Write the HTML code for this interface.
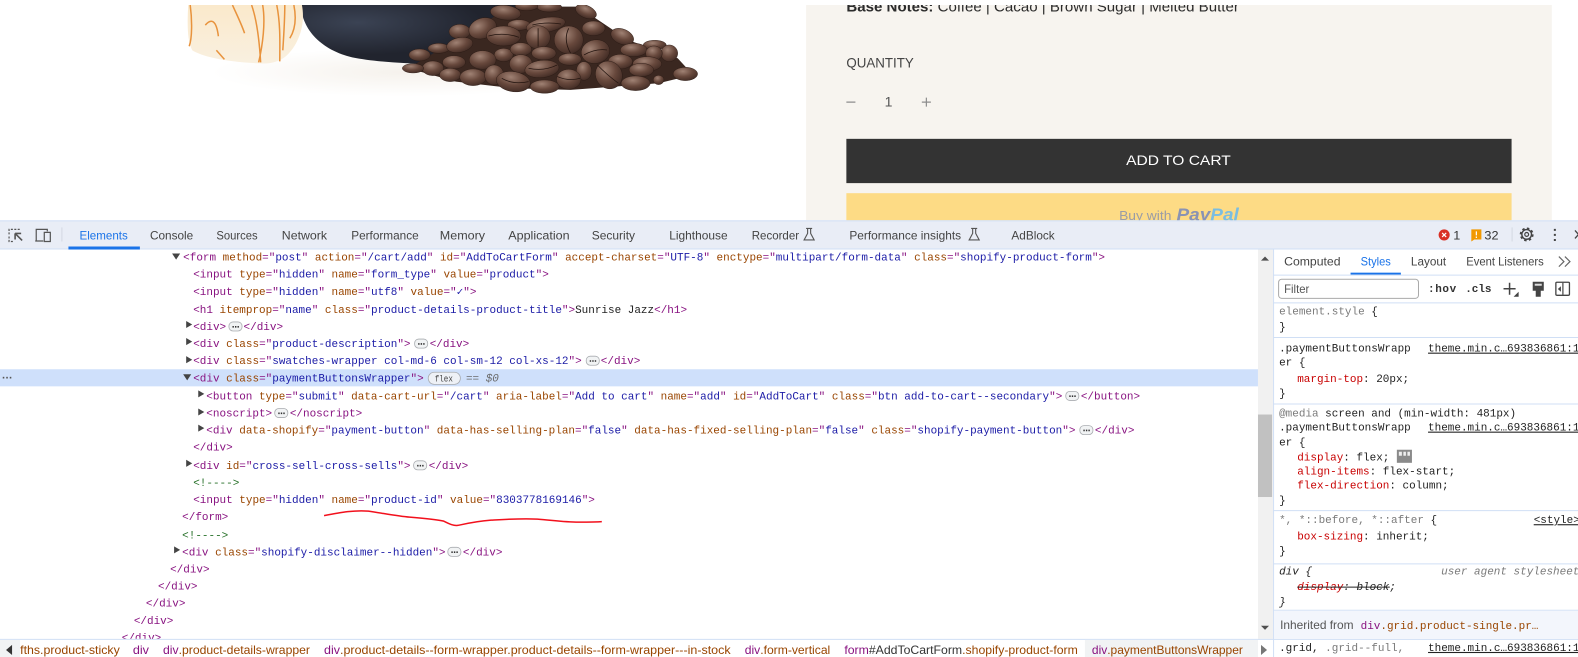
<!DOCTYPE html>
<html><head><meta charset="utf-8"><title>DevTools</title>
<style>
html,body{margin:0;padding:0;background:#fff;width:1578px;height:657px;overflow:hidden}
svg{display:block}
text{white-space:pre}
.m{font-family:"Liberation Mono",monospace;font-size:10.92px}
.s{font-family:"Liberation Sans",sans-serif;font-size:12px;fill:#444}
.t{fill:#881280}.a{fill:#994500}.v{fill:#1a1aa6}.c{fill:#236e25}
.p{fill:#c80000}.d{fill:#222}.g{fill:#7a7a7a}
.b{fill:url(#bean);stroke:#2a1a14;stroke-width:1.2}
.cr{fill:none;stroke:#241510;stroke-width:2.2}
.l{stroke:#d0dff5;stroke-width:1}
</style></head><body>
<svg width="1578" height="657" viewBox="0 0 1568 653" preserveAspectRatio="none" xmlns="http://www.w3.org/2000/svg">
<defs>
<radialGradient id="bean" cx=".4" cy=".3" r=".8"><stop offset="0" stop-color="#a08274"/><stop offset=".5" stop-color="#67483c"/><stop offset="1" stop-color="#3a2620"/></radialGradient>
<radialGradient id="cup" cx=".25" cy=".3" r=".55"><stop offset="0" stop-color="#3b4354"/><stop offset="1" stop-color="#21242e"/></radialGradient>
<radialGradient id="shade" cx=".5" cy=".5" r=".5"><stop offset="0" stop-color="#efe9e0"/><stop offset="1" stop-color="#fff"/></radialGradient>
<linearGradient id="truf" x1="0" x2="0" y1="0" y2="1"><stop offset="0" stop-color="#fae9cb"/><stop offset="1" stop-color="#f9f0e0"/></linearGradient>
<clipPath id="top"><rect x="0" y="5" width="1578" height="214"/></clipPath>
<clipPath id="tree"><rect x="0" y="248" width="1250" height="387"/></clipPath>
<clipPath id="rp"><rect x="1265" y="248" width="313" height="409"/></clipPath>
</defs>

<g clip-path="url(#top)">
<ellipse cx="400" cy="72" rx="190" ry="24" fill="url(#shade)" opacity=".6"/>
<path d="M299 5C300 30 320 50 350 57C380 63 430 65 460 62L520 30L525 5Z" fill="url(#cup)"/>
<path d="M187 5C186 25 186 40 191 50C200 56 225 62 259 63C270 64 280 60 285 55C296 45 304 25 300 5Z" fill="url(#truf)"/>
<g fill="none" stroke="#e8933d" stroke-width="1.500">
<path d="M189 5C191 20 191 38 188 46"/><path d="M231 5C235 14 240 24 243 33"/><path d="M204 25C210 18 215 20 217 36"/>
<path d="M250 5C256 22 258 45 259 62"/><path d="M261 5C264 22 261 45 257 62"/><path d="M275 5C279 25 278 45 278 61"/>
<path d="M283 5C283 20 282 35 281 50"/><path d="M292 5C295 20 293 30 288 38"/><path d="M215 50L223 59"/>
</g>
<g transform="translate(149 0) scale(.38 .331)">
<path d="M675 205L800 120L900 50L1000 20L1120 20L1250 120L1380 175L1420 225L1330 250L1100 270L950 265L800 245Z" fill="#3a2720"/>
<ellipse class="b" cx="985" cy="18" rx="30" ry="14"/><ellipse class="b" cx="1045" cy="22" rx="32" ry="14"/>
<ellipse class="b" cx="930" cy="38" rx="40" ry="22" transform="rotate(8 930 38)"/><ellipse class="b" cx="1140" cy="35" rx="30" ry="18" transform="rotate(30 1140 35)"/>
<ellipse class="b" cx="810" cy="95" rx="28" ry="22"/><ellipse class="b" cx="870" cy="85" rx="38" ry="30" transform="rotate(-30 870 85)"/>
<ellipse class="b" cx="965" cy="75" rx="30" ry="16"/><ellipse class="b" cx="1160" cy="85" rx="30" ry="22"/>
<ellipse class="b" cx="1235" cy="110" rx="32" ry="22" transform="rotate(30 1235 110)"/><ellipse class="b" cx="1320" cy="135" rx="30" ry="14"/>
<ellipse class="b" cx="1035" cy="75" rx="52" ry="22" transform="rotate(-12 1035 75)"/>
<ellipse class="b" cx="925" cy="108" rx="45" ry="30"/><ellipse class="b" cx="1015" cy="112" rx="32" ry="35"/>
<ellipse class="b" cx="1095" cy="120" rx="38" ry="42"/><ellipse class="b" cx="755" cy="145" rx="28" ry="15"/>
<ellipse class="b" cx="810" cy="135" rx="35" ry="22" transform="rotate(-15 810 135)"/><ellipse class="b" cx="1265" cy="150" rx="35" ry="20"/>
<ellipse class="b" cx="1165" cy="155" rx="38" ry="35" transform="rotate(-30 1165 155)"/><ellipse class="b" cx="1358" cy="160" rx="22" ry="25"/>
<ellipse class="b" cx="705" cy="165" rx="28" ry="18"/><ellipse class="b" cx="1318" cy="160" rx="22" ry="22"/>
<ellipse class="b" cx="925" cy="165" rx="25" ry="20"/><ellipse class="b" cx="970" cy="148" rx="28" ry="20"/><ellipse class="b" cx="1030" cy="160" rx="32" ry="20"/>
<ellipse class="b" cx="870" cy="180" rx="35" ry="28"/><ellipse class="b" cx="970" cy="192" rx="30" ry="28"/><ellipse class="b" cx="1098" cy="178" rx="30" ry="18"/>
<ellipse class="b" cx="795" cy="187" rx="30" ry="20"/><ellipse class="b" cx="1230" cy="185" rx="32" ry="22"/><ellipse class="b" cx="1300" cy="192" rx="38" ry="22"/>
<ellipse class="b" cx="740" cy="205" rx="28" ry="22"/><ellipse class="b" cx="688" cy="205" rx="28" ry="14"/><ellipse class="b" cx="1400" cy="222" rx="32" ry="20"/>
<ellipse class="b" cx="1285" cy="210" rx="32" ry="20"/><ellipse class="b" cx="1025" cy="207" rx="45" ry="26" transform="rotate(-8 1025 207)"/>
<ellipse class="b" cx="785" cy="225" rx="28" ry="20"/><ellipse class="b" cx="845" cy="232" rx="35" ry="25"/><ellipse class="b" cx="900" cy="225" rx="25" ry="30"/>
<ellipse class="b" cx="1135" cy="213" rx="20" ry="28"/><ellipse class="b" cx="1330" cy="240" rx="14" ry="14"/>
<ellipse class="b" cx="1200" cy="225" rx="35" ry="42" transform="rotate(-12 1200 225)"/><ellipse class="b" cx="1095" cy="238" rx="32" ry="30"/>
<ellipse class="b" cx="1270" cy="250" rx="38" ry="22"/><ellipse class="b" cx="950" cy="245" rx="45" ry="30" transform="rotate(12 950 245)"/><ellipse class="b" cx="1032" cy="260" rx="38" ry="20"/>
<path class="cr" d="M885 108Q925 96 965 112M1015 85V140M1095 85Q1080 120 1100 160M1170 195Q1195 225 1225 250M920 235Q950 255 990 245M990 205Q1030 215 1065 195M1065 230Q1095 245 1125 235M1000 75Q1035 65 1075 72M1135 165Q1165 145 1195 150"/>
</g>
<rect x="801" y="5" width="741" height="214" fill="#f7f4ef"/>
<text x="841" y="11.500" style="font-family:'Liberation Sans',sans-serif;font-size:15px;fill:#2b2b2b" textLength="390" lengthAdjust="spacingAndGlyphs"><tspan font-weight="bold">Base Notes:</tspan> Coffee | Cacao | Brown Sugar | Melted Butter</text>
<text x="841" y="67" style="font-family:'Liberation Sans',sans-serif;font-size:14px;fill:#444" textLength="67" lengthAdjust="spacingAndGlyphs">QUANTITY</text>
<path d="M841 101.500H850M916 101.500H925M920.500 97V106" stroke="#8d8d8d" stroke-width="1.200"/>
<text x="879" y="106" style="font-family:'Liberation Sans',sans-serif;font-size:14px;fill:#555">1</text>
<rect x="841" y="138" width="661" height="44" fill="#333"/>
<text x="1119" y="164" style="font-family:'Liberation Sans',sans-serif;font-size:14px;fill:#fff" textLength="104" lengthAdjust="spacingAndGlyphs">ADD TO CART</text>
<rect x="841" y="192" width="661" height="27" fill="#fddb85"/>
<text x="1112" y="218.500" style="font-family:'Liberation Sans',sans-serif;font-size:13px;fill:#9a9ca6" textLength="52" lengthAdjust="spacingAndGlyphs">Buy with</text>
<text x="1169" y="219" style="font-family:'Liberation Sans',sans-serif;font-size:17px;font-weight:bold;font-style:italic" textLength="62" lengthAdjust="spacingAndGlyphs"><tspan fill="#8a93b3">Pay</tspan><tspan fill="#7bbde0">Pal</tspan></text>
</g>

<!-- toolbar -->
<rect x="0" y="219" width="1578" height="28" fill="#e9edf6"/>
<path class="l" d="M0 219.500H1578M0 247.500H1578"/>
<path d="M61.500 226V240" stroke="#d3d8e2"/><path d="M1430.500 226V240" stroke="#d3d8e2" transform="translate(72 0)"/>
<g fill="none" stroke="#555" stroke-width="1.200">
<path d="M9 233V228H21M9 235V240H13" stroke-dasharray="2 1.400"/>
<path d="M15 232L22 239M15 232V238M15 232H21" stroke-width="1.600"/>
<path d="M36 239V228H47V230M35 239.500H43M44 231H50V240H44Z"/>
</g>
<rect x="68" y="245" width="71" height="3" fill="#1a73e8"/>
<g class="tabs">
<text class="s" x="79" y="238" style="fill:#1a73e8" textLength="48" lengthAdjust="spacingAndGlyphs">Elements</text>
<text class="s" x="149" y="238" textLength="43" lengthAdjust="spacingAndGlyphs">Console</text>
<text class="s" x="215" y="238" textLength="41" lengthAdjust="spacingAndGlyphs">Sources</text>
<text class="s" x="280" y="238" textLength="45" lengthAdjust="spacingAndGlyphs">Network</text>
<text class="s" x="349" y="238" textLength="67" lengthAdjust="spacingAndGlyphs">Performance</text>
<text class="s" x="437" y="238" textLength="45" lengthAdjust="spacingAndGlyphs">Memory</text>
<text class="s" x="505" y="238" textLength="61" lengthAdjust="spacingAndGlyphs">Application</text>
<text class="s" x="588" y="238" textLength="43" lengthAdjust="spacingAndGlyphs">Security</text>
<text class="s" x="665" y="238" textLength="58" lengthAdjust="spacingAndGlyphs">Lighthouse</text>
<text class="s" x="747" y="238" textLength="47" lengthAdjust="spacingAndGlyphs">Recorder</text>
<text class="s" x="844" y="238" textLength="111" lengthAdjust="spacingAndGlyphs">Performance insights</text>
<text class="s" x="1005" y="238" textLength="43" lengthAdjust="spacingAndGlyphs">AdBlock</text>
</g>
<path d="M801 227H807M802.500 227V232L799 238.500H809L805.500 232V227M965 227H971M966.500 227V232L963 238.500H973L969.500 232V227" fill="none" stroke="#555" stroke-width="1.100"/>
<circle cx="1435" cy="233.500" r="5.500" fill="#d93025"/>
<path d="M1433 231.500L1437 235.500M1437 231.500L1433 235.500" stroke="#fff" stroke-width="1.200"/>
<text class="s" x="1444" y="238" style="fill:#333" textLength="7" lengthAdjust="spacingAndGlyphs">1</text>
<path d="M1462 228H1472V238H1465L1462 240Z" fill="#f29900"/><path d="M1467 230V234M1467 235V236.500" stroke="#fff" stroke-width="1.200"/>
<text class="s" x="1475" y="238" style="fill:#333" textLength="14" lengthAdjust="spacingAndGlyphs">32</text>
<circle cx="1517" cy="233" r="4.800" fill="none" stroke="#444" stroke-width="1.400"/>
<circle cx="1517" cy="233" r="6" fill="none" stroke="#444" stroke-width="1.800" stroke-dasharray="2.400 2.312"/>
<circle cx="1517" cy="233" r="1.900" fill="none" stroke="#444" stroke-width="1.200"/>
<path d="M1545 227.500V229.500M1545 232.500V234.500M1545 237.500V239.500" stroke="#444" stroke-width="2"/>
<path d="M1565 229L1572 237M1572 229L1565 237" stroke="#444" stroke-width="1.300"/>

<!-- highlighted row -->
<rect x="0" y="367" width="1250" height="17" fill="#cfe0fb"/>
<text x="2" y="376" style="font-family:'Liberation Sans',sans-serif;font-size:11px;font-weight:bold;fill:#555" textLength="10" lengthAdjust="spacing">...</text>

<g clip-path="url(#tree)" class="m">
<text x="182" y="259"><tspan class="t">&lt;form</tspan><tspan class="a"> method</tspan><tspan class="t">="</tspan><tspan class="v">post</tspan><tspan class="t">"</tspan><tspan class="a"> action</tspan><tspan class="t">="</tspan><tspan class="v">/cart/add</tspan><tspan class="t">"</tspan><tspan class="a"> id</tspan><tspan class="t">="</tspan><tspan class="v">AddToCartForm</tspan><tspan class="t">"</tspan><tspan class="a"> accept-charset</tspan><tspan class="t">="</tspan><tspan class="v">UTF-8</tspan><tspan class="t">"</tspan><tspan class="a"> enctype</tspan><tspan class="t">="</tspan><tspan class="v">multipart/form-data</tspan><tspan class="t">"</tspan><tspan class="a"> class</tspan><tspan class="t">="</tspan><tspan class="v">shopify-product-form</tspan><tspan class="t">"&gt;</tspan></text>
<text x="192" y="276"><tspan class="t">&lt;input</tspan><tspan class="a"> type</tspan><tspan class="t">="</tspan><tspan class="v">hidden</tspan><tspan class="t">"</tspan><tspan class="a"> name</tspan><tspan class="t">="</tspan><tspan class="v">form_type</tspan><tspan class="t">"</tspan><tspan class="a"> value</tspan><tspan class="t">="</tspan><tspan class="v">product</tspan><tspan class="t">"&gt;</tspan></text>
<text x="192" y="293"><tspan class="t">&lt;input</tspan><tspan class="a"> type</tspan><tspan class="t">="</tspan><tspan class="v">hidden</tspan><tspan class="t">"</tspan><tspan class="a"> name</tspan><tspan class="t">="</tspan><tspan class="v">utf8</tspan><tspan class="t">"</tspan><tspan class="a"> value</tspan><tspan class="t">="</tspan><tspan class="v">✓</tspan><tspan class="t">"&gt;</tspan></text>
<text x="192" y="311"><tspan class="t">&lt;h1</tspan><tspan class="a"> itemprop</tspan><tspan class="t">="</tspan><tspan class="v">name</tspan><tspan class="t">"</tspan><tspan class="a"> class</tspan><tspan class="t">="</tspan><tspan class="v">product-details-product-title</tspan><tspan class="t">"&gt;</tspan><tspan class="d">Sunrise Jazz</tspan><tspan class="t">&lt;/h1&gt;</tspan></text>
<text x="192" y="328" class="t">&lt;div&gt;</text><text x="242" y="328" class="t">&lt;/div&gt;</text>
<text x="192" y="345"><tspan class="t">&lt;div</tspan><tspan class="a"> class</tspan><tspan class="t">="</tspan><tspan class="v">product-description</tspan><tspan class="t">"&gt;</tspan></text><text x="427" y="345" class="t">&lt;/div&gt;</text>
<text x="192" y="362"><tspan class="t">&lt;div</tspan><tspan class="a"> class</tspan><tspan class="t">="</tspan><tspan class="v">swatches-wrapper col-md-6 col-sm-12 col-xs-12</tspan><tspan class="t">"&gt;</tspan></text><text x="597" y="362" class="t">&lt;/div&gt;</text>
<text x="192" y="379"><tspan class="t">&lt;div</tspan><tspan class="a"> class</tspan><tspan class="t">="</tspan><tspan class="v">paymentButtonsWrapper</tspan><tspan class="t">"&gt;</tspan></text>
<text x="463" y="379" style="font-style:italic;fill:#6b6b6b">== $0</text>
<text x="205" y="397"><tspan class="t">&lt;button</tspan><tspan class="a"> type</tspan><tspan class="t">="</tspan><tspan class="v">submit</tspan><tspan class="t">"</tspan><tspan class="a"> data-cart-url</tspan><tspan class="t">="</tspan><tspan class="v">/cart</tspan><tspan class="t">"</tspan><tspan class="a"> aria-label</tspan><tspan class="t">="</tspan><tspan class="v">Add to cart</tspan><tspan class="t">"</tspan><tspan class="a"> name</tspan><tspan class="t">="</tspan><tspan class="v">add</tspan><tspan class="t">"</tspan><tspan class="a"> id</tspan><tspan class="t">="</tspan><tspan class="v">AddToCart</tspan><tspan class="t">"</tspan><tspan class="a"> class</tspan><tspan class="t">="</tspan><tspan class="v">btn add-to-cart--secondary</tspan><tspan class="t">"&gt;</tspan></text><text x="1074" y="397" class="t">&lt;/button&gt;</text>
<text x="205" y="414" class="t">&lt;noscript&gt;</text><text x="288" y="414" class="t">&lt;/noscript&gt;</text>
<text x="205" y="431"><tspan class="t">&lt;div</tspan><tspan class="a"> data-shopify</tspan><tspan class="t">="</tspan><tspan class="v">payment-button</tspan><tspan class="t">"</tspan><tspan class="a"> data-has-selling-plan</tspan><tspan class="t">="</tspan><tspan class="v">false</tspan><tspan class="t">"</tspan><tspan class="a"> data-has-fixed-selling-plan</tspan><tspan class="t">="</tspan><tspan class="v">false</tspan><tspan class="t">"</tspan><tspan class="a"> class</tspan><tspan class="t">="</tspan><tspan class="v">shopify-payment-button</tspan><tspan class="t">"&gt;</tspan></text><text x="1088" y="431" class="t">&lt;/div&gt;</text>
<text x="192" y="448" class="t">&lt;/div&gt;</text>
<text x="192" y="466"><tspan class="t">&lt;div</tspan><tspan class="a"> id</tspan><tspan class="t">="</tspan><tspan class="v">cross-sell-cross-sells</tspan><tspan class="t">"&gt;</tspan></text><text x="426" y="466" class="t">&lt;/div&gt;</text>
<text x="192" y="483" class="c">&lt;!----&gt;</text>
<text x="192" y="500"><tspan class="t">&lt;input</tspan><tspan class="a"> type</tspan><tspan class="t">="</tspan><tspan class="v">hidden</tspan><tspan class="t">"</tspan><tspan class="a"> name</tspan><tspan class="t">="</tspan><tspan class="v">product-id</tspan><tspan class="t">"</tspan><tspan class="a"> value</tspan><tspan class="t">="</tspan><tspan class="v">8303778169146</tspan><tspan class="t">"&gt;</tspan></text>
<text x="181" y="517" class="t">&lt;/form&gt;</text>
<text x="181" y="535" class="c">&lt;!----&gt;</text>
<text x="181" y="552"><tspan class="t">&lt;div</tspan><tspan class="a"> class</tspan><tspan class="t">="</tspan><tspan class="v">shopify-disclaimer--hidden</tspan><tspan class="t">"&gt;</tspan></text><text x="460" y="552" class="t">&lt;/div&gt;</text>
<text x="169" y="569" class="t">&lt;/div&gt;</text>
<text x="157" y="586" class="t">&lt;/div&gt;</text>
<text x="145" y="603" class="t">&lt;/div&gt;</text>
<text x="133" y="620" class="t">&lt;/div&gt;</text>
<text x="121" y="637" class="t">&lt;/div&gt;</text>
</g>
<!-- badges -->
<g fill="#f1f3f4" stroke="#a9acb0" stroke-width=".8">
<rect x="227.500" y="320" width="13" height="9" rx="4"/><rect x="412" y="337" width="13" height="9" rx="4"/><rect x="582.500" y="354" width="13" height="9" rx="4"/>
<rect x="1059" y="389" width="13" height="9" rx="4"/><rect x="273" y="406" width="13" height="9" rx="4"/><rect x="1073" y="423" width="13" height="9" rx="4"/>
<rect x="411" y="458" width="13" height="9" rx="4"/><rect x="445" y="544" width="13" height="9" rx="4"/>
<rect x="425.500" y="370" width="32" height="12" rx="6" fill="#eef1f6"/>
</g>
<text x="432" y="379" style="font-family:'Liberation Mono',monospace;font-size:9px;fill:#444" textLength="18" lengthAdjust="spacingAndGlyphs">flex</text>
<g fill="#333">
<path d="M231 324h1.400v1.600H231zM233.500 324h1.400v1.600h-1.400zM236 324h1.400v1.600H236zM415.500 341h1.400v1.600h-1.400zM418 341h1.400v1.600H418zM420.500 341h1.400v1.600h-1.400zM586 358h1.400v1.600H586zM588.500 358h1.400v1.600h-1.400zM591 358h1.400v1.600H591zM1062.500 393h1.400v1.600h-1.400zM1065 393h1.400v1.600H1065zM1067.500 393h1.400v1.600h-1.400zM276.500 410h1.400v1.600h-1.400zM279 410h1.400v1.600H279zM281.500 410h1.400v1.600h-1.400zM1076.500 427h1.400v1.600h-1.400zM1079 427h1.400v1.600H1079zM1081.500 427h1.400v1.600h-1.400zM414.500 462h1.400v1.600h-1.400zM417 462h1.400v1.600H417zM419.500 462h1.400v1.600h-1.400zM448.500 548h1.400v1.600h-1.400zM451 548h1.400v1.600H451zM453.500 548h1.400v1.600h-1.400z"/>
</g>
<!-- tree arrows -->
<g fill="#444">
<path d="M171 252H179L175 258ZM182 372H190L186 378Z"/>
<path d="M185 319V326L191 322.500ZM185 336V343L191 339.500ZM185 354V361L191 357.500ZM197 388V395L203 391.500ZM197 406V413L203 409.500ZM197 422V429L203 425.500ZM185 457V464L191 460.500ZM173 543V550L179 546.500Z"/>
</g>
<path d="M322 512.500C340 509 352 507 366 508C380 510 395 513 407 514C420 515 432 516 441 518C447 521 451 523 456 522C465 520 475 518 488 517C505 516 520 515 534 516C548 517 560 519 575 519C585 519 592 519 598 518.500" fill="none" stroke="#f2101c" stroke-width="1.500"/>

<!-- scrollbar -->
<rect x="1250" y="248" width="15" height="387" fill="#f1f1f1"/>
<rect x="1250" y="412" width="14" height="82" fill="#c1c1c1"/>
<path d="M1253 259H1261L1257 255ZM1253 622H1261L1257 626Z" fill="#505050"/>
<rect x="1265" y="248" width="313" height="409" fill="#fff"/>
<path class="l" d="M1265.500 248V657"/>

<!-- right panel -->
<text class="s" x="1276" y="264" textLength="56" lengthAdjust="spacingAndGlyphs">Computed</text>
<text class="s" x="1352" y="264" style="fill:#1a73e8" textLength="30" lengthAdjust="spacingAndGlyphs">Styles</text>
<text class="s" x="1402" y="264" textLength="35" lengthAdjust="spacingAndGlyphs">Layout</text>
<text class="s" x="1457" y="264" textLength="77" lengthAdjust="spacingAndGlyphs">Event Listeners</text>
<path d="M1549 255L1554 260L1549 265M1555 255L1560 260L1555 265" fill="none" stroke="#666" stroke-width="1.200"/>
<rect x="1342" y="271" width="50" height="2" fill="#1a73e8"/>
<path class="l" d="M1265 273.500H1578M1265 301H1578M1265 335.500H1578M1265 401.500H1578M1265 507.500H1578M1265 560.500H1578M1265 606.500H1578M1265 635.500H1578"/>
<rect x="1270.500" y="277.500" width="139" height="19" rx="3" fill="#fff" stroke="#a9a9a9"/>
<text class="s" x="1276" y="291" style="fill:#555" textLength="25" lengthAdjust="spacingAndGlyphs">Filter</text>
<g clip-path="url(#rp)" class="m">
<text x="1419" y="290" style="fill:#333;font-weight:bold" textLength="28">:hov</text>
<text x="1456" y="290" style="fill:#333;font-weight:bold" textLength="26">.cls</text>
<text x="1271" y="312.500" class="g">element.style <tspan class="d">{</tspan></text>
<text x="1271" y="328" class="d">}</text>
<text x="1271" y="349.500" class="d">.paymentButtonsWrapp</text>
<text x="1419" y="349.500" class="d" text-decoration="underline">theme.min.c…693836861:1</text>
<text x="1271" y="363.500" class="d">er {</text>
<text x="1289" y="379.500"><tspan class="p">margin-top</tspan><tspan class="d">: 20px;</tspan></text>
<text x="1271" y="394" class="d">}</text>
<text x="1271" y="414"><tspan class="g">@media</tspan><tspan class="d"> screen and (min-width: 481px)</tspan></text>
<text x="1271" y="428" class="d">.paymentButtonsWrapp</text>
<text x="1419" y="428" class="d" text-decoration="underline">theme.min.c…693836861:1</text>
<text x="1271" y="443" class="d">er {</text>
<text x="1289" y="457.500"><tspan class="p">display</tspan><tspan class="d">: flex;</tspan></text>
<text x="1289" y="471.500"><tspan class="p">align-items</tspan><tspan class="d">: flex-start;</tspan></text>
<text x="1289" y="485.500"><tspan class="p">flex-direction</tspan><tspan class="d">: column;</tspan></text>
<text x="1271" y="500.500" class="d">}</text>
<text x="1271" y="520"><tspan class="g">*, *::before, *::after </tspan><tspan class="d">{</tspan></text>
<text x="1524" y="520" class="d" text-decoration="underline">&lt;style&gt;</text>
<text x="1289" y="536"><tspan class="p">box-sizing</tspan><tspan class="d">: inherit;</tspan></text>
<text x="1271" y="550.500" class="d">}</text>
<text x="1271" y="571" style="font-style:italic" class="d">div {</text>
<text x="1432" y="571" style="font-style:italic" class="g">user agent stylesheet</text>
<text x="1289" y="586.500" style="font-style:italic"><tspan class="p">display</tspan><tspan class="d">: block;</tspan></text>
<path d="M1289 583.500H1381" stroke="#222"/>
<text x="1271" y="601.500" class="d" style="font-style:italic">}</text>
</g>
<rect x="1266" y="607" width="312" height="28" fill="#f3f6fc"/>
<text class="s" x="1272" y="625" style="fill:#555" textLength="73" lengthAdjust="spacingAndGlyphs">Inherited from</text>
<text x="1352" y="625" class="m" style="fill:#881280">div<tspan class="a">.grid.product-single.pr…</tspan></text>
<g clip-path="url(#rp)" class="m">
<text x="1271" y="647"><tspan class="d">.grid,</tspan><tspan class="g"> .grid--full,</tspan></text>
<text x="1419" y="647" class="d" text-decoration="underline">theme.min.c…693836861:1</text>
</g>
<!-- right panel icons -->
<path d="M1494 287H1506M1500 281V293" stroke="#444" stroke-width="1.500"/><path d="M1504 295L1509 295L1509 290Z" fill="#444"/>
<path d="M1523 280H1534V289H1523ZM1526 289H1531V295H1526Z" fill="#444"/><path d="M1525 282H1532V284H1525Z" fill="#ddd"/>
<rect x="1546" y="280.500" width="13.500" height="13" rx="1" fill="none" stroke="#444" stroke-width="1.300"/><path d="M1553 281V293" stroke="#444" stroke-width="1.200"/><path d="M1551 284.500V290L1548 287.200Z" fill="#444"/>
<path d="M1388 447H1403V460H1388Z" fill="#8a8a8a"/><path d="M1390 449H1393V453H1390ZM1394.500 449H1397V453H1394.500ZM1398.500 449H1401V453H1398.500Z" fill="#eee"/>

<!-- breadcrumb -->
<rect x="0" y="636" width="1250" height="21" fill="#fff"/>
<path class="l" d="M0 635.500H1265"/>
<rect x="0" y="636" width="20" height="21" fill="#f1f3f4"/>
<path d="M12 641V651L6 646Z" fill="#333"/>
<rect x="1078" y="636" width="172" height="21" fill="#f1f3f4"/>
<path d="M1253 641V651L1259 646Z" fill="#777"/>
<g class="s">
<text class="s a" x="20" y="650" textLength="99" lengthAdjust="spacingAndGlyphs">fths.product-sticky</text>
<text class="s t" x="132" y="650" textLength="16" lengthAdjust="spacingAndGlyphs">div</text>
<text class="s" x="162" y="650" textLength="146" lengthAdjust="spacingAndGlyphs"><tspan class="t">div</tspan><tspan class="a">.product-details-wrapper</tspan></text>
<text class="s" x="322" y="650" textLength="404" lengthAdjust="spacingAndGlyphs"><tspan class="t">div</tspan><tspan class="a">.product-details--form-wrapper.product-details--form-wrapper---in-stock</tspan></text>
<text class="s" x="740" y="650" textLength="85" lengthAdjust="spacingAndGlyphs"><tspan class="t">div</tspan><tspan class="a">.form-vertical</tspan></text>
<text class="s" x="839" y="650" textLength="232" lengthAdjust="spacingAndGlyphs"><tspan class="t">form</tspan><tspan fill="#333">#AddToCartForm</tspan><tspan class="a">.shopify-product-form</tspan></text>
<text class="s" x="1085" y="650" textLength="150" lengthAdjust="spacingAndGlyphs"><tspan class="t">div</tspan><tspan class="a">.paymentButtonsWrapper</tspan></text>
</g>
</svg>
</body></html>
